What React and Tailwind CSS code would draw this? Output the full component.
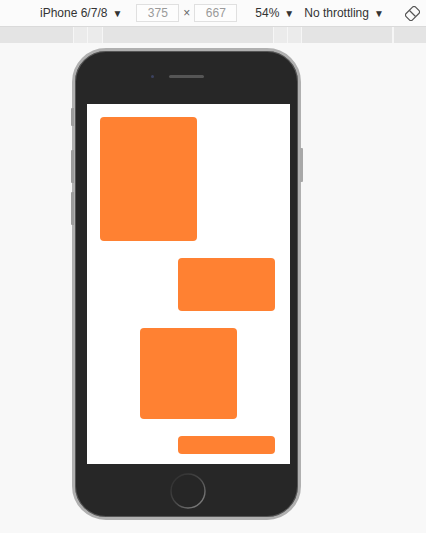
import React from "react";

function Caret() {
  return <span className="text-[10px] ml-[5px] text-[#333]">▼</span>;
}

export default function App() {
  return (
    <div className="w-[426px] h-[533px] bg-[#f8f8f8] overflow-hidden relative" style={{ fontFamily: '"Liberation Sans", Arial, sans-serif' }}>
      {/* toolbar */}
      <div className="h-[27px] bg-[#fbfbfb] border-b border-[#dadada] flex items-center text-[12px] text-[#333]">
        <div className="ml-[40px] flex items-center">iPhone 6/7/8<Caret /></div>
        <div className="ml-[14px] w-[43px] h-[18px] border border-[#e0e0e0] bg-[#fdfdfd] flex items-center justify-center text-[#9a9a9a]">375</div>
        <div className="mx-[4px] text-[#666] text-[12px]">×</div>
        <div className="w-[43px] h-[18px] border border-[#e0e0e0] bg-[#fdfdfd] flex items-center justify-center text-[#9a9a9a]">667</div>
        <div className="ml-[18px] flex items-center">54%<Caret /></div>
        <div className="ml-[10px] flex items-center">No throttling<Caret /></div>
        <svg className="ml-[21px]" width="15" height="15" viewBox="0 0 15 15">
          <g transform="rotate(45 7.5 7.5)">
            <rect x="3" y="0.8" width="9" height="13.4" rx="2.2" fill="none" stroke="#555" strokeWidth="1.2" />
            <line x1="3.2" y1="7.5" x2="11.8" y2="7.5" stroke="#555" strokeWidth="1.2" />
          </g>
        </svg>
      </div>
      {/* ruler */}
      <div className="h-[16px] flex bg-[#e4e4e4]">
        <div className="w-[73px]" />
        <div className="w-[14px] bg-[#ebebeb] border-l border-[#f6f6f6]" />
        <div className="w-[15px] bg-[#ebebeb] border-l border-[#f6f6f6]" />
        <div className="w-[171px] border-l border-[#f6f6f6]" />
        <div className="w-[14px] bg-[#ebebeb] border-l border-[#f6f6f6]" />
        <div className="w-[14px] bg-[#ebebeb] border-l border-[#f6f6f6]" />
        <div className="w-[91px] border-l border-[#f6f6f6]" />
        <div className="w-[2px] bg-[#f6f6f6]" />
        <div className="flex-1" />
      </div>

      {/* phone */}
      <div className="relative ml-[72px] mt-[5px] w-[229px] h-[472px] rounded-[34px] border-[3px] border-[#b0b0b0] bg-[#272727] flex flex-col shadow-[inset_0_0_0_1px_#555]">
        {/* side buttons */}
        <div className="absolute left-[-4px] top-[57px] w-[3px] h-[18px] rounded-l-[1px] bg-[#9c9c9c]" />
        <div className="absolute left-[-4px] top-[99px] w-[3px] h-[33px] rounded-l-[1px] bg-[#9c9c9c]" />
        <div className="absolute left-[-4px] top-[141px] w-[3px] h-[33px] rounded-l-[1px] bg-[#9c9c9c]" />
        <div className="absolute right-[-5px] top-[97px] w-[3px] h-[34px] rounded-r-[1px] bg-[#a8a8a8]" />

        {/* top area */}
        <div className="h-[53px] flex items-start justify-center pt-[24px]">
          <div className="flex items-center">
            <div className="w-[3px] h-[3px] rounded-full bg-[#3c4260] mr-[15px]" />
            <div className="w-[35px] h-[3px] rounded-full bg-[#555]" />
            <div className="w-[18px]" />
          </div>
        </div>

        {/* screen */}
        <div className="ml-[12px] w-[203px] h-[360px] bg-white flex flex-col pt-[13px]">
          <div className="ml-[13px] w-[97px] h-[124px] rounded-[4px] bg-[#ff8132]" />
          <div className="self-end mr-[15px] mt-[17px] w-[97px] h-[53px] rounded-[4px] bg-[#ff8132]" />
          <div className="ml-[53px] mt-[17px] w-[97px] h-[91px] rounded-[4px] bg-[#ff8132]" />
          <div className="self-end mr-[15px] mt-[17px] w-[97px] h-[18px] rounded-[4px] bg-[#ff8132]" />
        </div>

        {/* bottom area */}
        <div className="flex-1 flex items-center justify-center pl-[2px]">
          <svg width="38" height="38" viewBox="0 0 38 38">
            <defs>
              <linearGradient id="hb" x1="0" y1="0" x2="1" y2="1">
                <stop offset="0" stopColor="#2c2c2c" />
                <stop offset="0.45" stopColor="#444" />
                <stop offset="1" stopColor="#8a8a8a" />
              </linearGradient>
            </defs>
            <circle cx="19" cy="19" r="17" fill="#262626" stroke="url(#hb)" strokeWidth="1.4" />
          </svg>
        </div>
      </div>
    </div>
  );
}
